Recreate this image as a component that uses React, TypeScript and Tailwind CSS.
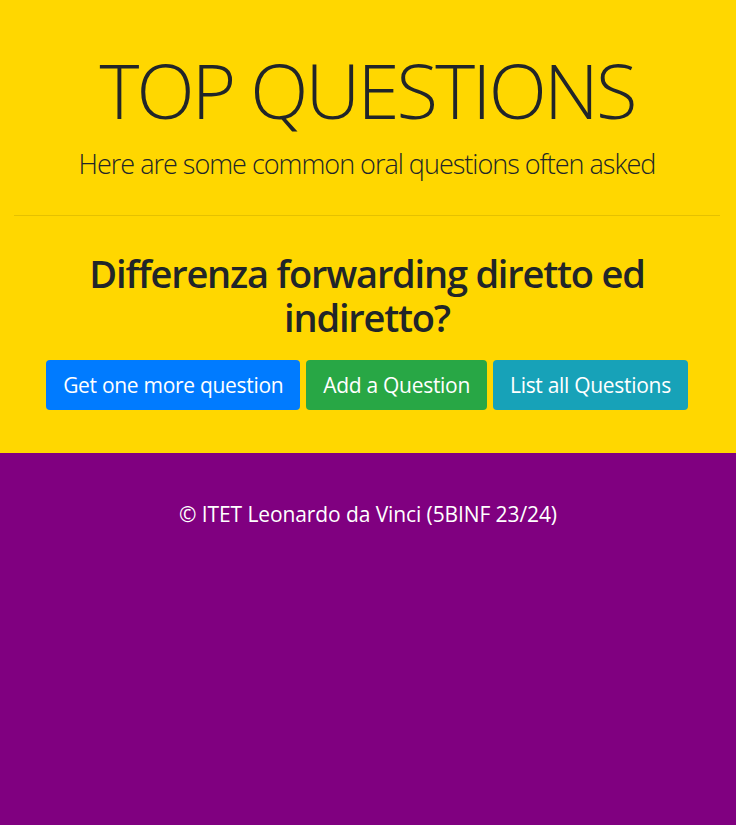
export default function App() {
  const font = { fontFamily: '"Open Sans", "Noto Sans", Arial, sans-serif' };

  return (
    <div className="min-h-screen bg-[#800080]" style={font}>
      {/* jumbotron */}
      <div className="bg-[#ffd700] pl-[14px] pr-[16px] pt-[44px] pb-[43px] text-center text-[#212529]">
        <h1 className="text-[76px] font-light leading-[91px] tracking-[-2.8px]">TOP QUESTIONS</h1>
        <p className="mt-[8px] text-[27px] font-light leading-[42px] tracking-[-1px]">
          Here are some common oral questions often asked
        </p>
        <hr className="mt-[30px] border-t border-black/10" />

        <h2 className="mx-auto mt-[35px] max-w-[600px] text-[38px] font-semibold leading-[44px] tracking-[-1.2px]">
          Differenza forwarding diretto ed indiretto?
        </h2>

        <div className="mt-[21px] flex justify-center gap-[6px]">
          <button className="h-[50px] rounded-[4px] bg-[#007bff] px-[17px] pt-[2px] text-[21px] tracking-[-0.3px] text-white">
            Get one more question
          </button>
          <button className="h-[50px] rounded-[4px] bg-[#28a745] px-[17px] pt-[2px] text-[21px] tracking-[-0.3px] text-white">
            Add a Question
          </button>
          <button className="h-[50px] rounded-[4px] bg-[#17a2b8] px-[17px] pt-[2px] text-[21px] tracking-[-0.3px] text-white">
            List all Questions
          </button>
        </div>
      </div>

      {/* footer */}
      <footer className="pt-[45px] text-center text-[21px] leading-[33px] tracking-[-0.1px] text-white">
        © ITET Leonardo da Vinci (5BINF 23/24)
      </footer>
    </div>
  );
}
